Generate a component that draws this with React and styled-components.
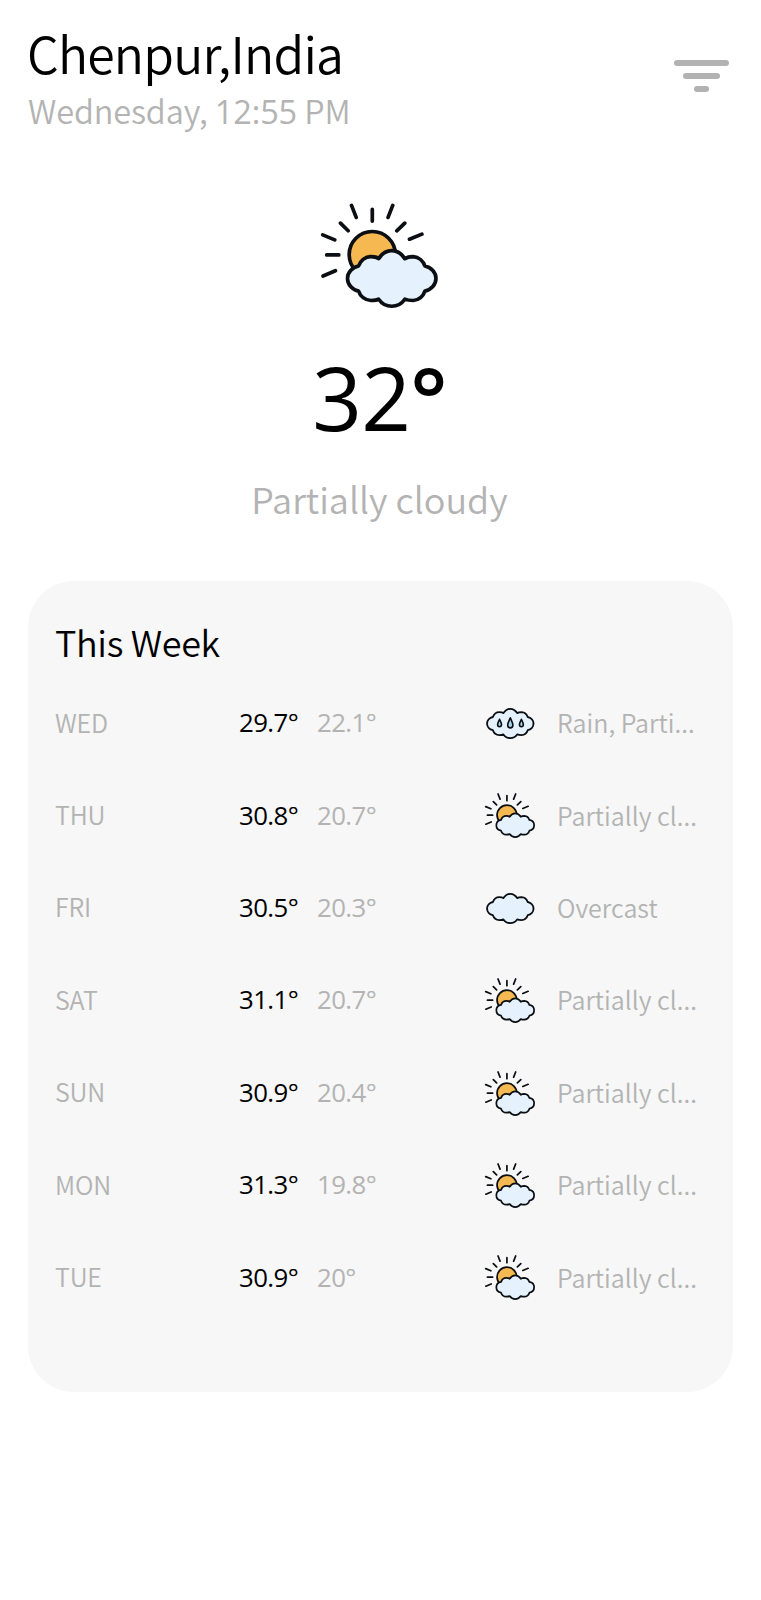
import React from "react";
import styled, { createGlobalStyle } from "styled-components";

const GlobalStyle = createGlobalStyle`
  * { box-sizing: border-box; }
  body {
    margin: 0;
    background: #fff;
    color: #000;
    font-family: "Noto Sans CJK SC", "Noto Sans", sans-serif;
    font-weight: 350;
  }
`;

const MUTED = "#b3b3b3";
const INK = "#0b0e12";

const Screen = styled.main`
  display: flex;
  flex-direction: column;
  min-height: 1600px;
  padding: 17px 28px 0;
`;

const Header = styled.header`
  display: flex;
  justify-content: space-between;
  align-items: flex-start;
  height: 113px;
`;

const Place = styled.h1`
  margin: 0 0 0 -1px;
  font-size: 50px;
  font-weight: 350;
  line-height: 70px;
  letter-spacing: -0.8px;
  white-space: nowrap;
`;

const Moment = styled.p`
  margin: 3px 0 0;
  color: ${MUTED};
  font-size: 32.5px;
  line-height: 40px;
  letter-spacing: -0.15px;
  white-space: nowrap;
`;

const Clock = styled.span`
  font-family: "Open Sans", sans-serif;
  font-size: 32.5px;
  font-weight: 400;
  line-height: 1;
  letter-spacing: -0.1px;
`;

const MenuButton = styled.button`
  display: flex;
  flex-direction: column;
  align-items: center;
  gap: 7px;
  margin: 43px 4px 0 0;
  padding: 0;
  border: 0;
  background: none;
`;

const MenuBar = styled.span`
  width: ${({ $width }) => $width}px;
  height: 6px;
  border-radius: 3px;
  background: #b2b2b2;
`;

const Current = styled.section`
  display: flex;
  flex-direction: column;
  align-items: center;
  height: 450.5px;
  padding: 73px 2px 0 0;
`;

const Temperature = styled.div`
  margin-top: 38px;
  font-family: "Open Sans", sans-serif;
  font-size: 87px;
  font-weight: 400;
  line-height: 100px;
  letter-spacing: -0.8px;
`;

const DegreeSign = styled.span`
  font-weight: 600;
`;

const Condition = styled.div`
  margin-top: 27px;
  color: ${MUTED};
  font-size: 36px;
  line-height: 48px;
`;

const WeekCard = styled.section`
  width: 705px;
  height: 811px;
  padding: 36px 27px 0;
  border-radius: 46px;
  background: #f7f7f7;
`;

const WeekTitle = styled.h2`
  margin: 0 0 12px;
  font-size: 36px;
  font-weight: 350;
  line-height: 48px;
  letter-spacing: -0.35px;
`;

const DayRow = styled.div`
  display: grid;
  grid-template-columns: 184px 78px 168px 72px 1fr;
  align-items: center;
  height: 92.4px;
  font-size: 25px;
  line-height: 36px;
  color: ${MUTED};
  white-space: nowrap;
`;

const DayName = styled.span`
  padding-bottom: 2px;
  letter-spacing: -0.2px;
`;

const Summary = styled.span`
  padding-bottom: 1px;
`;

const Degrees = styled.span`
  padding-bottom: 1px;
  color: ${({ $high }) => ($high ? "#000" : MUTED)};
  font-family: "Open Sans", sans-serif;
  font-size: 25.8px;
  font-weight: 400;
  letter-spacing: -0.6px;
`;

const IconSlot = styled.span`
  display: flex;
  justify-content: flex-end;
  width: 50px;
  padding-top: 2px;
`;

const Drawing = styled.svg`
  display: block;
  overflow: visible;
`;

const CLOUD =
  "M177 229C182 214 196 201 214 201C224 201 232 203 237 207C246 193 261 183 276 183C292 183 306 193 315 207C321 203 329 201 340 201C357 202 370 214 375 229C394 233 408 249 408 266C408 284 394 300 375 304C370 319 357 331 340 332C330 332 322 331 315 328C306 341 292 349 276 349C261 349 246 341 237 328C232 331 224 332 214 332C196 331 182 319 177 304C158 300 144 284 144 266C144 249 158 233 177 229Z";

const RAYS =
  "M156 48L170 84M218 60V95M279 48L265 84M123 101L146 124M315 101L291 124M70 136L106 151M366 134L329 149M82 196H118M71 259L108 243";

const DROPS = [
  { x: 215, s: 1 },
  { x: 276, s: 1.35 },
  { x: 339, s: 1 },
];

function Cloud({ stroke = 12 }) {
  return <path d={CLOUD} fill="#e5f1fc" stroke={INK} strokeWidth={stroke} strokeLinejoin="round" />;
}

function PartlyCloudyIcon({ width, stroke = 12 }) {
  return (
    <Drawing width={width} height={width * 0.908} viewBox="65 41 349 317">
      <path d={RAYS} stroke={INK} strokeWidth={stroke} strokeLinecap="round" />
      <circle cx="218" cy="195" r="69" fill="#f6b850" stroke={INK} strokeWidth={stroke} />
      <Cloud stroke={stroke} />
    </Drawing>
  );
}

function CloudIcon({ rain }) {
  return (
    <Drawing width="48.6" height="31" viewBox="138 178 276 176">
      <Cloud stroke={10.5} />
      {rain &&
        DROPS.map(({ x, s }) => (
          <path
            key={x}
            transform={`translate(${x} 264) scale(${s})`}
            d="M0-22C-4-12-11-2-11 8A11 12 0 0 0 11 8C11-2 4-12 0-22Z"
            fill="#a9d3ea"
            stroke={INK}
            strokeWidth={9 / s}
            strokeLinejoin="round"
          />
        ))}
    </Drawing>
  );
}

function WeatherIcon({ kind }) {
  if (kind === "partly") return <PartlyCloudyIcon width={50} />;
  return <CloudIcon rain={kind === "rain"} />;
}

const WEEK = [
  { day: "WED", high: "29.7", low: "22.1", kind: "rain", text: "Rain, Parti..." },
  { day: "THU", high: "30.8", low: "20.7", kind: "partly", text: "Partially cl..." },
  { day: "FRI", high: "30.5", low: "20.3", kind: "cloud", text: "Overcast" },
  { day: "SAT", high: "31.1", low: "20.7", kind: "partly", text: "Partially cl..." },
  { day: "SUN", high: "30.9", low: "20.4", kind: "partly", text: "Partially cl..." },
  { day: "MON", high: "31.3", low: "19.8", kind: "partly", text: "Partially cl..." },
  { day: "TUE", high: "30.9", low: "20", kind: "partly", text: "Partially cl..." },
];

export default function App() {
  return (
    <>
      <GlobalStyle />
      <Screen>
        <Header>
          <div>
            <Place>Chenpur,India</Place>
            <Moment>
              Wednesday, <Clock>12:55</Clock> PM
            </Moment>
          </div>
          <MenuButton aria-label="Menu">
            <MenuBar $width={55} />
            <MenuBar $width={37} />
            <MenuBar $width={15} />
          </MenuButton>
        </Header>
        <Current>
          <PartlyCloudyIcon width={117} stroke={11} />
          <Temperature>
            32<DegreeSign>°</DegreeSign>
          </Temperature>
          <Condition>Partially cloudy</Condition>
        </Current>
        <WeekCard>
          <WeekTitle>This Week</WeekTitle>
          {WEEK.map(({ day, high, low, kind, text }) => (
            <DayRow key={day}>
              <DayName>{day}</DayName>
              <Degrees $high>{high}°</Degrees>
              <Degrees>{low}°</Degrees>
              <IconSlot>
                <WeatherIcon kind={kind} />
              </IconSlot>
              <Summary>{text}</Summary>
            </DayRow>
          ))}
        </WeekCard>
      </Screen>
    </>
  );
}
